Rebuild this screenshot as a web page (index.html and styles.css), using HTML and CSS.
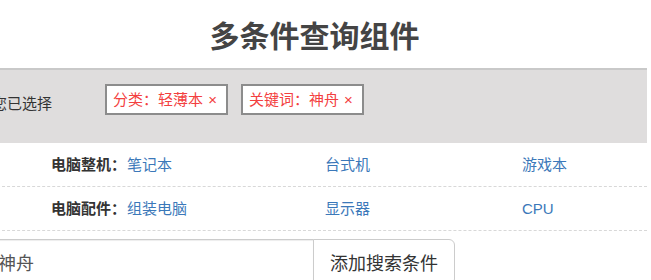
FILE: index.html
```html
<!DOCTYPE html>
<html lang="zh-CN">
<head>
<meta charset="utf-8">
<title>多条件查询组件</title>
<link rel="stylesheet" href="styles.css">
</head>
<body>
<div class="page">
  <h1 class="title">多条件查询组件</h1>
  <div class="selected">
    <span class="selected-label">您已选择</span>
    <div class="tags">
      <span class="tag">分类：轻薄本 <span class="tag-x">×</span></span>
      <span class="tag">关键词：神舟 <span class="tag-x">×</span></span>
    </div>
  </div>
  <div class="row">
    <span class="row-label">电脑整机：</span>
    <div class="options">
      <a class="opt">笔记本</a>
      <a class="opt">台式机</a>
      <a class="opt">游戏本</a>
    </div>
  </div>
  <div class="row">
    <span class="row-label">电脑配件：</span>
    <div class="options">
      <a class="opt">组装电脑</a>
      <a class="opt">显示器</a>
      <a class="opt">CPU</a>
    </div>
  </div>
  <div class="input-group">
    <input class="search-input" type="text" value="神舟">
    <button class="search-btn">添加搜索条件</button>
  </div>
</div>
</body>
</html>
```

FILE: styles.css
```css
html, body {
  margin: 0;
  padding: 0;
  overflow: hidden;
  background: #fff;
}
body {
  font-family: "Liberation Sans", "Noto Sans CJK SC", sans-serif;
  color: #333;
}
.page {
  margin-left: -18px;
  width: 665px;
}
.title {
  margin: 0 0 12px;
  padding-top: 12px;
  height: 44px;
  line-height: 44px;
  font-size: 30px;
  font-weight: bold;
  color: #444;
  text-align: center;
  font-family: "Noto Sans CJK SC", sans-serif;
}
.selected {
  box-sizing: content-box;
  height: 59px;
  padding: 14px 0 0 10px;
  border-top: 2px solid #c9c9c9;
  background: #dfdddd;
  display: flex;
  align-items: flex-start;
}
.selected-label {
  margin-top: 10px;
  width: 113px;
  line-height: 20px;
  font-size: 15px;
  color: #333;
}
.tags {
  display: flex;
  gap: 13px;
}
.tag {
  display: inline-block;
  height: 27px;
  line-height: 27px;
  padding: 0 9px 0 6px;
  border: 2px solid #8c8c8c;
  background: #fff;
  color: #f34040;
  font-size: 15px;
  white-space: nowrap;
}
.tag-x {
  margin-left: 1px;
}
.row {
  display: flex;
  height: 43px;
  line-height: 43px;
  border-bottom: 1px dashed #d8d8d8;
  padding-left: 69px;
  font-size: 15px;
}
.row-label {
  width: 76px;
  font-weight: bold;
  color: #333;
  white-space: nowrap;
}
.options {
  display: grid;
  grid-template-columns: 198px 197px 120px;
}
.opt {
  color: #3b78b9;
  text-decoration: none;
}
.input-group {
  display: flex;
  margin-top: 8px;
  margin-left: -1px;
  height: 46px;
}
.search-input {
  box-sizing: border-box;
  width: 333px;
  height: 46px;
  padding: 10px 16px;
  border: 1px solid #ccc;
  border-radius: 6px 0 0 6px;
  font-size: 18px;
  color: #555;
  font-family: "Liberation Sans", "Noto Sans CJK SC", sans-serif;
  outline: none;
  box-shadow: inset 0 1px 1px rgba(0,0,0,0.075);
}
.search-btn {
  box-sizing: border-box;
  margin-left: -1px;
  height: 46px;
  padding: 0 16px;
  border: 1px solid #ccc;
  border-radius: 0 6px 6px 0;
  background: #fff;
  color: #333;
  font-size: 18px;
  font-family: "Liberation Sans", "Noto Sans CJK SC", sans-serif;
}
```
